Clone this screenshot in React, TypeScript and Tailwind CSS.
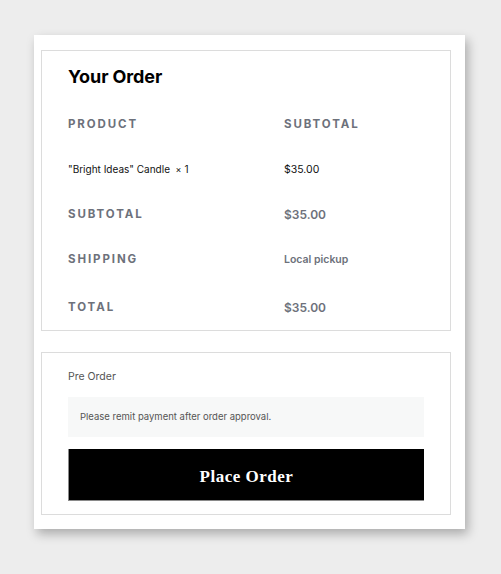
import React from "react";

const rows = [
  { label: "SUBTOTAL", value: "$35.00", kind: "money" },
  { label: "SHIPPING", value: "Local pickup", kind: "small" },
];

const labelCls =
  "text-[11.5px] font-bold tracking-[1.9px] text-[#6d717b]";

const App: React.FC = () => {
  return (
    <div
      className="min-h-screen w-full bg-[#ededed] pt-[35px] pl-[34px]"
      style={{ fontFamily: "Inter, 'Noto Sans', sans-serif" }}
    >
      <div className="w-[431px] bg-white pt-[15px] pl-[7px] pr-[14px] pb-[14px] shadow-[3px_5px_10px_rgba(0,0,0,0.28)]">
        {/* Order summary */}
        <div className="border border-[#dcdcdc] px-[26px]">
          <div className="h-[51px] flex items-center">
            <h2 className="text-[18px] font-bold text-black tracking-[-0.1px]">Your Order</h2>
          </div>

          <div className="grid grid-cols-[216px_1fr] h-[45px] items-center">
            <span className={labelCls}>PRODUCT</span>
            <span className={labelCls}>SUBTOTAL</span>
          </div>

          <div className="grid grid-cols-[216px_1fr] h-[45px] items-center">
            <span className="text-[10px] text-[#111]">
              "Bright Ideas" Candle&nbsp;&nbsp;<span className="text-[9px]">×</span>&nbsp;1
            </span>
            <span className="text-[10.5px] text-[#111]">$35.00</span>
          </div>

          {rows.map((r) => (
            <div key={r.label} className="grid grid-cols-[216px_1fr] h-[45px] items-center">
              <span className={labelCls}>{r.label}</span>
              <span
                className={
                  r.kind === "money"
                    ? "text-[12px] font-semibold text-[#6d717b]"
                    : "text-[10.5px] font-semibold text-[#6d717b]"
                }
              >
                {r.value}
              </span>
            </div>
          ))}

          <div className="grid grid-cols-[216px_1fr] h-[48px] items-center pt-[4px]">
            <span className={labelCls}>TOTAL</span>
            <span className="text-[12px] font-semibold text-[#6d717b]">$35.00</span>
          </div>
        </div>

        {/* Payment */}
        <div className="mt-[21px] border border-[#dcdcdc] px-[26px] pt-[15px] pb-[13px]">
          <p className="h-[18px] leading-[18px] text-[10.5px] text-[#555]">Pre Order</p>
          <div className="mt-[11px] h-[40px] bg-[#f7f8f8] flex items-center pl-[12px]">
            <p className="text-[9.5px] text-[#555]">Please remit payment after order approval.</p>
          </div>
          <button
            className="mt-[12px] w-full h-[52px] pt-[4px] bg-black text-white text-[17px] font-bold tracking-[0.5px] border-b border-l border-[#8a8a8a]"
            style={{ fontFamily: "'Liberation Serif', serif" }}
          >
            Place Order
          </button>
        </div>
      </div>
    </div>
  );
};

export default App;
